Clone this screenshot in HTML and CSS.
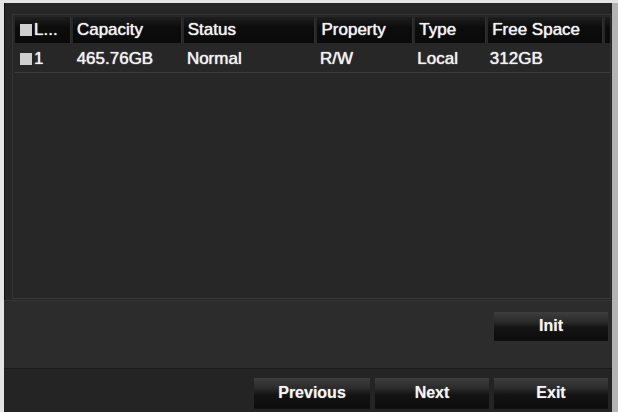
FILE: index.html
```html
<!DOCTYPE html>
<html lang="en">
<head>
<meta charset="UTF-8">
<meta name="viewport" content="width=device-width, initial-scale=1.0">
<title>HDD Information</title>
<link rel="stylesheet" href="styles.css">
</head>
<body>

<div class="screen">
  <div class="disk-panel">
    <div class="disk-row disk-head">
      <div class="cell c-no"><span class="check"></span>L...</div>
      <div class="cell c-cap">Capacity</div>
      <div class="cell c-status">Status</div>
      <div class="cell c-prop">Property</div>
      <div class="cell c-type">Type</div>
      <div class="cell c-free">Free Space</div>
      <div class="cell c-end"></div>
    </div>
    <div class="disk-row disk-item">
      <div class="cell c-no"><span class="check"></span>1</div>
      <div class="cell c-cap">465.76GB</div>
      <div class="cell c-status">Normal</div>
      <div class="cell c-prop">R/W</div>
      <div class="cell c-type">Local</div>
      <div class="cell c-free">312GB</div>
      <div class="cell c-end"></div>
    </div>
  </div>

  <div class="tool-bar">
    <button class="btn">Init</button>
  </div>

  <div class="nav-bar">
    <button class="btn">Previous</button>
    <button class="btn">Next</button>
    <button class="btn">Exit</button>
  </div>
</div>

</body>
</html>
```

FILE: styles.css
```css
body {
  margin: 0;
  background-color: #e4e4e4;
  font-family: "Liberation Sans", Arial, sans-serif;
}
.screen {
  margin: 3px 0 0 4px;
  width: 608px;
  height: 409px;
  border-right: 6px solid #b4b4b4;
  background-color: #262626;
  display: flex;
  flex-direction: column;
  box-shadow: inset 1px 0 0 #111;
}
.disk-panel {
  margin: 11px 1px 0 8px;
  height: 281px;
  padding: 2px 0 0 2px;
  border: 1px solid #343434;
  border-bottom-color: #3a3a3a;
  background-color: #272727;
}
.disk-row {
  display: flex;
  gap: 3px;
}
.cell {
  padding-left: 4px;
  color: #f2f2f2;
  font-size: 17px;
  line-height: 26px;
  white-space: nowrap;
  overflow: hidden;
  text-shadow: 0 0 1px rgba(255,255,255,0.8), 0 0 1px rgba(255,255,255,0.5);
  display: flex;
  align-items: center;
}
.disk-head .cell {
  background: linear-gradient(#1e1e1e, #0c0c0c 40%, #0a0a0a);
  box-shadow: 1px 0 0 #303030;
}
.disk-item {
  margin-top: 3px;
  border-bottom: 1px solid #3c3c3c;
}
.check {
  display: inline-block;
  width: 12px;
  height: 12px;
  margin-right: 2px;
  background-color: #cfcfcf;
}
.c-no { width: 50px; padding-left: 5px; }
.c-cap { width: 104px; }
.c-status { width: 127px; }
.c-prop { width: 91px; }
.c-type { width: 66px; }
.c-free { width: 110px; }
.c-end { width: 5px; padding-left: 0; }
.disk-item .c-end { width: 8px; }
.tool-bar {
  margin-top: 1px;
  height: 68px;
  background-color: #2c2c2c;
  border-top: 1px solid #353535;
  display: flex;
  justify-content: flex-end;
  align-items: flex-start;
  padding: 11px 4px 0 0;
  box-sizing: border-box;
}
.nav-bar {
  flex: 1;
  background-color: #242424;
  border-top: 1px solid #1c1c1c;
  display: flex;
  justify-content: flex-end;
  gap: 5px;
  padding: 9px 4px 0 0;
}
.btn {
  width: 114px;
  height: 28px;
  border: none;
  padding: 0;
  color: #f4f4f4;
  font-family: "Liberation Sans", Arial, sans-serif;
  font-size: 16px;
  font-weight: bold;
  text-shadow: 0 0 1px rgba(255,255,255,0.5);
  background: linear-gradient(#3e3e3e, #2a2a2a 35%, #141414 55%, #0c0c0c);
  box-shadow: 0 1px 0 #111;
}
.nav-bar .btn {
  height: 30px;
}
.nav-bar .btn:first-child {
  width: 116px;
}
```
